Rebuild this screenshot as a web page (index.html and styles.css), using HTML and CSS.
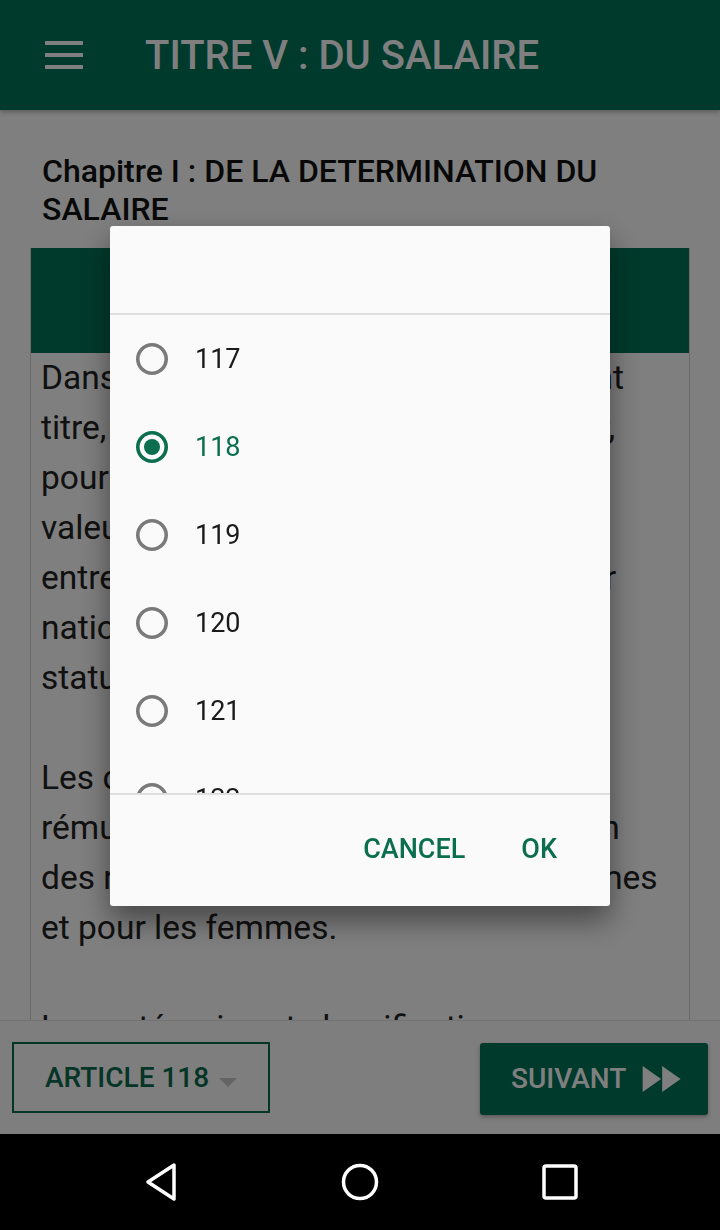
FILE: index.html
```html
<!DOCTYPE html>
<html lang="fr">
<head>
    <meta charset="UTF-8">
    <title>TITRE V : DU SALAIRE</title>
    <link rel="stylesheet" href="styles.css">
</head>
<body>
    <div class="screen">
        <header class="appbar">
            <svg class="menu-icon" width="38" height="28" viewBox="0 0 38 28">
                <rect x="0" y="0" width="38" height="4" fill="#fff"/>
                <rect x="0" y="12" width="38" height="4" fill="#fff"/>
                <rect x="0" y="24" width="38" height="4" fill="#fff"/>
            </svg>
            <h1>TITRE V : DU SALAIRE</h1>
        </header>

        <main class="content">
            <h2 class="chapter">Chapitre I : DE LA DETERMINATION DU SALAIRE</h2>
            <div class="card">
                <div class="card-head"></div>
                <div class="card-body">
                    <p>Dans les conditions prévues au présent<br>titre, tout employeur est tenu d'assurer,<br>pour un même travail ou un travail de<br>valeur égale, l'égalité de salaire<br>entre les employés, quelle que soit leur<br>nationalité, leur sexe, leur âge et leur<br>statut.</p>
                    <p>Les différents éléments de la<br>rémunération doivent être établis selon<br>des règles équivalentes pour les hommes<br>et pour les femmes.</p>
                    <p>Les catégories et classifications<br>professionnelles ainsi que les critères de<br>promotion sont communs aux travailleurs.</p>
                </div>
            </div>
        </main>

        <footer class="bottombar">
            <button class="article-btn">
                ARTICLE 118
                <span class="caret"></span>
            </button>
            <button class="next-btn">
                SUIVANT
                <svg width="52" height="52" viewBox="0 0 24 24">
                    <path d="M4 18l8.5-6L4 6v12zm9-12v12l8.5-6L13 6z" fill="#fff"/>
                </svg>
            </button>
        </footer>

        <div class="scrim"></div>

        <nav class="navbar">
            <svg width="36" height="40" viewBox="0 0 36 40">
                <path d="M31 3 L5 20 L31 37 Z" fill="none" stroke="#fff" stroke-width="3.5" stroke-linejoin="round"/>
            </svg>
            <svg width="40" height="40" viewBox="0 0 40 40">
                <circle cx="20" cy="20" r="16.5" fill="none" stroke="#fff" stroke-width="3.5"/>
            </svg>
            <svg width="38" height="38" viewBox="0 0 38 38">
                <rect x="3" y="3" width="32" height="32" rx="2" fill="none" stroke="#fff" stroke-width="3.5"/>
            </svg>
        </nav>
    </div>

    <div class="dialog">
        <div class="dialog-title"></div>
        <ul class="choices">
            <li class="choice">
                <svg class="radio" width="36" height="36" viewBox="0 0 36 36"><circle cx="18" cy="18" r="14.2" fill="none" stroke="currentColor" stroke-width="3.6"/></svg>
                <span>117</span>
            </li>
            <li class="choice selected">
                <svg class="radio" width="36" height="36" viewBox="0 0 36 36"><circle cx="18" cy="18" r="14.2" fill="none" stroke="currentColor" stroke-width="3.6"/><circle cx="18" cy="18" r="8" fill="currentColor"/></svg>
                <span>118</span>
            </li>
            <li class="choice">
                <svg class="radio" width="36" height="36" viewBox="0 0 36 36"><circle cx="18" cy="18" r="14.2" fill="none" stroke="currentColor" stroke-width="3.6"/></svg>
                <span>119</span>
            </li>
            <li class="choice">
                <svg class="radio" width="36" height="36" viewBox="0 0 36 36"><circle cx="18" cy="18" r="14.2" fill="none" stroke="currentColor" stroke-width="3.6"/></svg>
                <span>120</span>
            </li>
            <li class="choice">
                <svg class="radio" width="36" height="36" viewBox="0 0 36 36"><circle cx="18" cy="18" r="14.2" fill="none" stroke="currentColor" stroke-width="3.6"/></svg>
                <span>121</span>
            </li>
            <li class="choice">
                <svg class="radio" width="36" height="36" viewBox="0 0 36 36"><circle cx="18" cy="18" r="14.2" fill="none" stroke="currentColor" stroke-width="3.6"/></svg>
                <span>122</span>
            </li>
        </ul>
        <div class="dialog-actions">
            <button class="text-btn">CANCEL</button>
            <button class="text-btn">OK</button>
        </div>
    </div>
</body>
</html>
```

FILE: styles.css
```css
* {
    margin: 0;
    padding: 0;
    box-sizing: border-box;
    font-family: Roboto, 'Noto Sans', sans-serif;
}

body {
    width: 720px;
    height: 1230px;
    overflow: hidden;
    background: #fff;
}

.screen {
    display: flex;
    flex-direction: column;
    height: 1230px;
}

.appbar {
    height: 110px;
    flex-shrink: 0;
    background: #007458;
    display: flex;
    align-items: center;
    padding-left: 45px;
    box-shadow: 0 2px 5px rgba(0,0,0,0.3);
    position: relative;
    z-index: 1;
}

.menu-icon {
    margin-right: 62px;
}

.appbar h1 {
    color: #fff;
    font-size: 40px;
    font-weight: 500;
}

.content {
    flex: 1;
    overflow: hidden;
    padding: 42px 30px 0;
}

.chapter {
    font-size: 32px;
    font-weight: 500;
    line-height: 38px;
    color: #111;
    padding-left: 12px;
    margin-bottom: 20px;
}

.card {
    border-left: 1px solid #d6d6d6;
    border-right: 1px solid #d6d6d6;
}

.card-head {
    height: 105px;
    background: #007458;
}

.card-body {
    padding: 0 10px;
}

.card-body p {
    font-size: 33.5px;
    line-height: 50px;
    color: #222;
    white-space: nowrap;
    margin-bottom: 50px;
}

.bottombar {
    height: 114px;
    flex-shrink: 0;
    background: #fcfcfc;
    border-top: 1px solid #e6e6e6;
    display: flex;
    align-items: center;
    justify-content: space-between;
    padding: 0 12px;
    position: relative;
}

.article-btn {
    width: 258px;
    height: 71px;
    background: transparent;
    border: 2px solid #0b6a4c;
    color: #0b6a4c;
    font-size: 28px;
    font-weight: 500;
    text-align: left;
    padding-left: 31px;
    display: flex;
    align-items: center;
}

.caret {
    width: 0;
    height: 0;
    border-left: 9px solid transparent;
    border-right: 9px solid transparent;
    border-top: 9px solid #c8c8c8;
    margin-left: 10px;
    margin-top: 10px;
}

.next-btn {
    width: 228px;
    height: 72px;
    margin-top: 2px;
    background: #007458;
    color: #fff;
    border: none;
    border-radius: 3px;
    font-size: 28px;
    font-weight: 500;
    display: flex;
    align-items: center;
    padding-left: 31px;
    gap: 8px;
    box-shadow: 0 2px 4px rgba(0,0,0,0.3);
}

.scrim {
    position: fixed;
    left: 0;
    top: 0;
    width: 720px;
    height: 1134px;
    background: rgba(0,0,0,0.5);
    z-index: 5;
}

.navbar {
    height: 96px;
    flex-shrink: 0;
    background: #000;
    display: flex;
    align-items: center;
    justify-content: space-between;
    padding: 0 141px 0 143px;
}

.dialog {
    position: fixed;
    left: 110px;
    top: 226px;
    width: 500px;
    height: 680px;
    background: #fafafa;
    border-radius: 3px;
    box-shadow: 0 14px 30px rgba(0,0,0,0.45);
    display: flex;
    flex-direction: column;
    z-index: 10;
}

.dialog-title {
    height: 89px;
    border-bottom: 2px solid #dedede;
    flex-shrink: 0;
}

.choices {
    list-style: none;
    flex: 1;
    overflow: hidden;
}

.choice {
    height: 88px;
    display: flex;
    align-items: center;
    padding-left: 24px;
    font-size: 27px;
    color: #1a1a1a;
}

.choice .radio {
    color: #7a7a7a;
    margin-right: 25px;
}

.choice.selected,
.choice.selected .radio {
    color: #0b6e4f;
}

.dialog-actions {
    height: 113px;
    flex-shrink: 0;
    border-top: 2px solid #dedede;
    display: flex;
    justify-content: flex-end;
    align-items: center;
    padding: 0 53px 4px 0;
    gap: 56px;
}

.text-btn {
    background: none;
    border: none;
    color: #0b6e4f;
    font-size: 27px;
    font-weight: 500;
}
```
